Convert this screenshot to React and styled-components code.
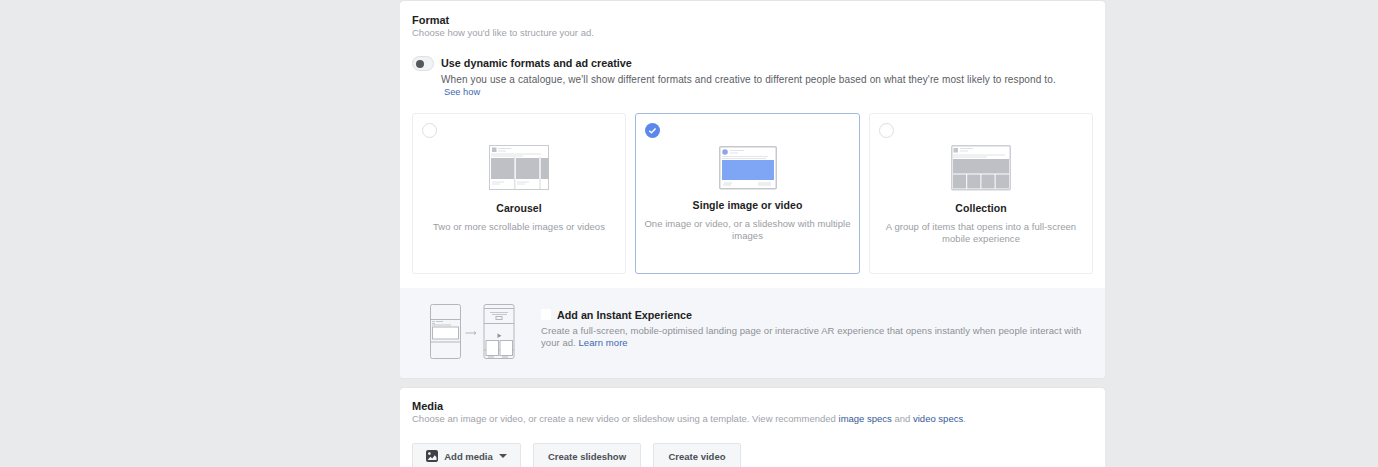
import styled, { createGlobalStyle } from "styled-components";

const GlobalStyle = createGlobalStyle`
  html, body {
    margin: 0;
    padding: 0;
    height: 100%;
    overflow: hidden;
    background: #e9eaec;
    font-family: "Liberation Sans", Arial, sans-serif;
    -webkit-font-smoothing: antialiased;
  }
`;

const formats = [
  {
    title: "Carousel",
    text: "Two or more scrollable images or videos",
    Art: CarouselArt,
  },
  {
    title: "Single image or video",
    text: "One image or video, or a slideshow with multiple images",
    Art: SingleArt,
    selected: true,
  },
  {
    title: "Collection",
    text: "A group of items that opens into a full-screen mobile experience",
    Art: CollectionArt,
  },
];

function CarouselArt() {
  return (
    <svg width="60" height="46" viewBox="0 0 60 46">
      <rect x="0.5" y="0.5" width="59" height="44" fill="#fff" stroke="#c9cbd0" />
      <rect x="3" y="2.5" width="4.5" height="4.5" fill="#bfc2c8" />
      <path d="M9 3.5h13M9 6h8M2 9h50M2 11h32" stroke="#d8dade" strokeWidth="0.8" />
      <rect x="2" y="13" width="23" height="21" fill="#bec0c6" />
      <rect x="27" y="13" width="23" height="21" fill="#bec0c6" />
      <rect x="52" y="13" width="8" height="21" fill="#bec0c6" />
      <path d="M25.8 12v32M51 12v32" stroke="#c9cbd0" strokeWidth="0.8" />
      <path d="M3 37h12M3 39h8M28 37h12M28 39h8" stroke="#d8dade" strokeWidth="0.8" />
    </svg>
  );
}

function SingleArt() {
  return (
    <svg width="58" height="44" viewBox="0 0 58 44">
      <rect x="0.75" y="0.75" width="56.5" height="42" rx="1" fill="#fff" stroke="#c6c8cd" strokeWidth="1.5" />
      <circle cx="6" cy="6" r="2.8" fill="#8ea6e6" />
      <path d="M11 4.5h14M11 7h8M3 10.5h46M3 12.5h44" stroke="#dcdee2" strokeWidth="0.8" />
      <rect x="3" y="14" width="52" height="20" fill="#7fa6f5" />
      <path d="M5 37h8M4 39h8M39 37h13M39 39h13" stroke="#d2d4d9" strokeWidth="0.8" />
    </svg>
  );
}

function CollectionArt() {
  return (
    <svg width="60" height="46" viewBox="0 0 60 46">
      <rect x="0.75" y="0.75" width="58.5" height="44" rx="1" fill="#fff" stroke="#cdcfd4" strokeWidth="1.5" />
      <rect x="2.5" y="3" width="4.5" height="4.5" fill="#c4c6cb" />
      <path d="M9 3.5h13M9 6h8M2 10h52M2 12h34" stroke="#d8dade" strokeWidth="0.8" />
      <rect x="2" y="14" width="56" height="14.5" fill="#bec0c6" />
      <rect x="2" y="29.5" width="13.2" height="14" fill="#bec0c6" />
      <rect x="16.2" y="29.5" width="13.2" height="14" fill="#bec0c6" />
      <rect x="30.4" y="29.5" width="13.2" height="14" fill="#bec0c6" />
      <rect x="44.6" y="29.5" width="13.4" height="14" fill="#bec0c6" />
    </svg>
  );
}

function ExperienceArt() {
  return (
    <svg width="85" height="55" viewBox="0 0 85 55">
      <g fill="#f5f6fa" stroke="#b4b6bc" strokeWidth="1">
        <rect x="0.5" y="0.5" width="30" height="54" rx="2" />
        <rect x="54" y="0.5" width="30" height="54" rx="2" />
      </g>
      <path d="M0.5 15.5h30M0.5 38h30M54 4.5h30M54 19.5h30M54 46h30" stroke="#b4b6bc" fill="none" />
      <rect x="2.5" y="23" width="26" height="12" fill="#fff" stroke="#b4b6bc" />
      <path d="M2 17.5h3M2 19.5h3M6 17.5h7M2 21h19" stroke="#c5c7cc" strokeWidth="1" />
      <path d="M35.5 29h10.5M44 27.5l2 1.5-2 1.5" stroke="#b4b6bc" strokeWidth="1" fill="none" />
      <path d="M60 8.5h18M62 10.5h15" stroke="#c5c7cc" strokeWidth="1" />
      <rect x="66" y="12.5" width="6" height="3" fill="none" stroke="#b4b6bc" />
      <path d="M67.5 29.5l4 2.2-4 2.2z" fill="#8f9197" />
      <rect x="56" y="36.5" width="12.5" height="15" fill="#fff" stroke="#b4b6bc" />
      <rect x="70" y="36.5" width="12.5" height="15" fill="#fff" stroke="#b4b6bc" />
      <path d="M58 53h6M72 53h6" stroke="#b4b6bc" />
    </svg>
  );
}

const CheckMark = () => (
  <svg width="15" height="15" viewBox="0 0 16 16">
    <circle cx="8" cy="8" r="8" fill="#5b88ea" />
    <path d="M4.6 8.2l2.3 2.2 4.4-4.6" fill="none" stroke="#fff" strokeWidth="1.6" />
  </svg>
);

const PhotoIcon = () => (
  <svg width="12" height="12" viewBox="0 0 12 12">
    <rect width="12" height="12" rx="2" fill="#3f4146" />
    <circle cx="3.4" cy="3.6" r="1.3" fill="#f5f6f7" />
    <path d="M1.5 10l3-3.2 1.7 1.6 2.6-3.2 1.7 2V10z" fill="#f5f6f7" />
  </svg>
);

export default function App() {
  return (
    <>
      <GlobalStyle />
      <Page>
        <Panel>
          <PanelHead>
            <Title>Format</Title>
            <Sub>Choose how you'd like to structure your ad.</Sub>
          </PanelHead>
          <DynamicRow>
            <Toggle />
            <DynamicText>
              <DynamicTitle>Use dynamic formats and ad creative</DynamicTitle>
              <DynamicDesc>
                When you use a catalogue, we'll show different formats and creative to different people based on what they're most likely to respond to.
              </DynamicDesc>
              <SeeHow>See how</SeeHow>
            </DynamicText>
          </DynamicRow>
          <CardGrid>
            {formats.map(({ title, text, Art, selected }) => (
              <Card key={title} $selected={selected}>
                <RadioSlot>{selected ? <CheckMark /> : <Radio />}</RadioSlot>
                <ArtSlot><Art /></ArtSlot>
                <CardTitle $selected={selected}>{title}</CardTitle>
                <CardText>{text}</CardText>
              </Card>
            ))}
          </CardGrid>
          <Experience>
            <ExperienceArt />
            <ExperienceBody>
              <ExperienceHead>
                <CheckBox />
                <ExperienceTitle>Add an Instant Experience</ExperienceTitle>
              </ExperienceHead>
              <ExperienceText>
                Create a full-screen, mobile-optimised landing page or interactive AR experience that opens instantly when people interact with your ad. <BlueLink>Learn more</BlueLink>
              </ExperienceText>
            </ExperienceBody>
          </Experience>
        </Panel>
        <MediaPanel>
          <Title>Media</Title>
          <Sub>
            Choose an image or video, or create a new video or slideshow using a template. View recommended <DarkLink>image specs</DarkLink> and <DarkLink>video specs</DarkLink>.
          </Sub>
          <Buttons>
            <Button $width={109}>
              <PhotoIcon />
              Add media
              <Caret />
            </Button>
            <Button $width={108}>Create slideshow</Button>
            <Button $width={88}>Create video</Button>
          </Buttons>
        </MediaPanel>
      </Page>
    </>
  );
}

const Page = styled.div`
  width: 705px;
  height: 467px;
  margin-left: 400px;
  padding-top: 1px;
  box-sizing: border-box;
  overflow: hidden;
  display: flex;
  flex-direction: column;
  gap: 10px;
`;

const Panel = styled.section`
  background: #fff;
  border-radius: 3px;
  box-shadow: 0 0 1px rgba(0, 0, 0, 0.22);
  overflow: hidden;
  flex: none;
  height: 377px;
  display: flex;
  flex-direction: column;
`;

const PanelHead = styled.div`
  padding: 12px 12px 0;
`;

const Title = styled.div`
  font-size: 11px;
  line-height: 14px;
  font-weight: 700;
  color: #1d1e22;
`;

const Sub = styled.div`
  font-size: 9.5px;
  line-height: 12px;
  color: #a0a3a9;
`;

const DynamicRow = styled.div`
  display: flex;
  gap: 7px;
  padding: 17px 12px 0;
`;

const Toggle = styled.div`
  width: 22px;
  height: 15px;
  border-radius: 8px;
  background: #f1f2f4;
  border: 1px solid #dddfe3;
  box-sizing: border-box;
  flex: none;
  position: relative;
  &::after {
    content: "";
    position: absolute;
    left: 3px;
    top: 2.5px;
    width: 8px;
    height: 8px;
    border-radius: 50%;
    background: #55575d;
  }
`;

const DynamicText = styled.div`
  display: flex;
  flex-direction: column;
`;

const DynamicTitle = styled.div`
  font-size: 10.8px;
  line-height: 15px;
  font-weight: 700;
  color: #1d1e22;
`;

const DynamicDesc = styled.div`
  font-size: 10px;
  line-height: 14px;
  letter-spacing: 0.126px;
  white-space: nowrap;
  color: #5a5d63;
  margin-top: 2px;
`;

const SeeHow = styled.a`
  font-size: 9.3px;
  line-height: 13px;
  color: #4267b2;
  padding-left: 3px;
  margin-top: -1px;
`;

const CardGrid = styled.div`
  display: grid;
  grid-template-columns: 214px 225px 224px;
  gap: 9px;
  padding: 14px 12px 0;
`;

const Card = styled.div`
  height: 161px;
  box-sizing: border-box;
  border: 1px solid ${(props) => (props.$selected ? "#a3b8de" : "#ebedf0")};
  border-radius: 3px;
  display: flex;
  flex-direction: column;
  align-items: center;
  padding: 9px 8px 0;
  position: relative;
`;

const RadioSlot = styled.div`
  position: absolute;
  left: 9px;
  top: 9px;
  width: 15px;
  height: 15px;
`;

const Radio = styled.div`
  width: 15px;
  height: 15px;
  border-radius: 50%;
  border: 1.5px solid #dcdee2;
  box-sizing: border-box;
  background: #fff;
`;

const ArtSlot = styled.div`
  height: 46px;
  margin-top: 22px;
  display: flex;
  align-items: center;
`;

const CardTitle = styled.div`
  font-size: 10.5px;
  line-height: 14px;
  font-weight: 700;
  letter-spacing: 0.06px;
  color: #1d1e22;
  margin-top: ${(props) => (props.$selected ? "7px" : "10px")};
`;

const CardText = styled.div`
  font-size: 9.5px;
  line-height: 12px;
  letter-spacing: 0.05px;
  color: #9a9da3;
  text-align: center;
  margin-top: 6px;
`;

const Experience = styled.div`
  margin-top: 14px;
  flex: 1;
  background: #f5f6fa;
  display: flex;
  align-items: center;
  gap: 26px;
  padding: 0 20px 3px 30px;
`;

const ExperienceBody = styled.div`
  display: flex;
  flex-direction: column;
  flex: 1;
  padding-bottom: 7px;
`;

const ExperienceHead = styled.div`
  display: flex;
  align-items: center;
  gap: 6px;
`;

const CheckBox = styled.div`
  width: 10px;
  height: 11px;
  background: #fff;
  border-radius: 1px;
`;

const ExperienceTitle = styled.div`
  font-size: 10.75px;
  line-height: 14px;
  font-weight: 700;
  color: #1d1e22;
`;

const ExperienceText = styled.div`
  font-size: 9.5px;
  line-height: 12px;
  letter-spacing: 0.06px;
  color: #8d9096;
  margin-top: 3px;
`;

const BlueLink = styled.a`
  color: #4267b2;
`;

const MediaPanel = styled.section`
  background: #fff;
  border-radius: 3px 3px 0 0;
  box-shadow: 0 0 1px rgba(0, 0, 0, 0.22);
  padding: 11px 12px 0;
  flex: 1;
`;

const DarkLink = styled.a`
  color: #365899;
`;

const Buttons = styled.div`
  display: flex;
  gap: 12px;
  margin-top: 18px;
`;

const Button = styled.div`
  width: ${(props) => props.$width}px;
  height: 26px;
  box-sizing: border-box;
  background: #f5f6f7;
  border: 1px solid #e3e5e9;
  border-radius: 2px;
  display: flex;
  align-items: center;
  justify-content: center;
  gap: 6px;
  font-size: 9.5px;
  font-weight: 700;
  color: #4b4f56;
`;

const Caret = styled.span`
  width: 0;
  height: 0;
  border-left: 4.5px solid transparent;
  border-right: 4.5px solid transparent;
  border-top: 4.5px solid #4b4f56;
`;
